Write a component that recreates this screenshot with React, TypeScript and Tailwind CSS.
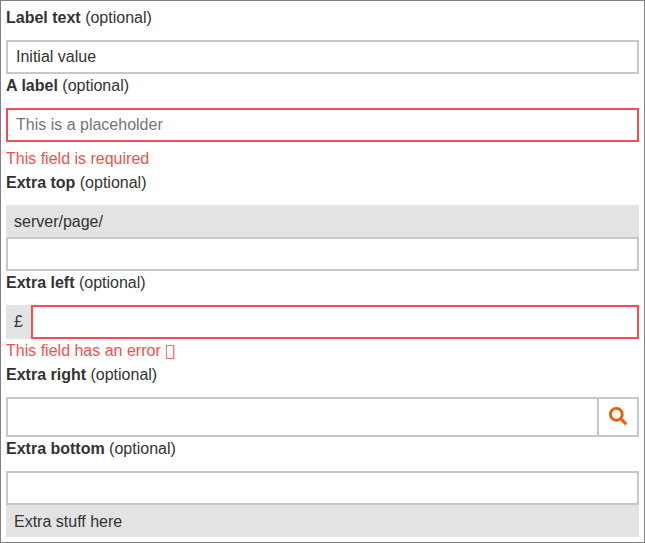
import type { ReactNode } from 'react';
import { FaSearch } from 'react-icons/fa';

function Label({ children }: { children: ReactNode }) {
  return (
    <div className="mb-2.5 h-6">
      <b>{children}</b> (optional)
    </div>
  );
}

const field = 'block h-[34px] w-full min-w-0 border-2 bg-white px-2 outline-none placeholder:text-[#757575]';
const plain = 'border-[#c8c8c8]';
const invalid = 'border-[#f05050]';

export default function App() {
  return (
    <main className="h-[543px] w-[645px] border border-[#808080] bg-white p-[5px] font-['Liberation_Sans',Arial,sans-serif] text-base leading-6 text-[#333333]">
      <Label>Label text</Label>
      <input className={`${field} ${plain}`} defaultValue="Initial value" />
      <Label>A label</Label>
      <input className={`${field} ${invalid}`} placeholder="This is a placeholder" />
      <div className="mt-[5px] h-6 text-[#f05050]">This field is required</div>
      <Label>Extra top</Label>
      <div className="h-8 bg-[#e3e3e3] px-2 pt-[5px]">server/page/</div>
      <input className={`${field} ${plain}`} />
      <Label>Extra left</Label>
      <div className="flex h-[34px]">
        <div className="flex w-[25px] shrink-0 items-center bg-[#e3e3e3] pl-2">£</div>
        <input className={`${field} ${invalid}`} />
      </div>
      <div className="flex h-6 text-[#f05050]">
        This field has an error
        <span className="mt-1.5 ml-[5px] h-3.5 w-2 border border-[#f05050]/80 shadow-[1px_0_0_#f0505040]" />
      </div>
      <Label>Extra right</Label>
      <div className="flex h-10 border-2 border-[#c8c8c8]">
        <input className="min-w-0 flex-1 bg-white px-2 outline-none" />
        <button className="flex w-10 items-center justify-center border-l-2 border-[#c8c8c8] pb-0.5 text-[#f05a00]" aria-label="Search">
          <FaSearch size={18} />
        </button>
      </div>
      <Label>Extra bottom</Label>
      <input className={`${field} ${plain}`} />
      <div className="h-8 bg-[#e3e3e3] px-2 pt-[5px]">Extra stuff here</div>
    </main>
  );
}
